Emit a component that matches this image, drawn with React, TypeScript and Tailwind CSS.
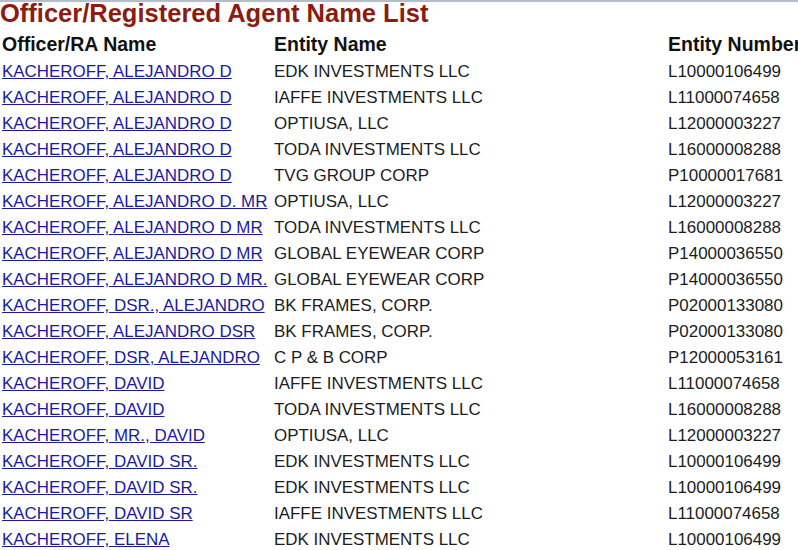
import React from "react";

const rows: [string, string, string][] = [
  ["KACHEROFF, ALEJANDRO D", "EDK INVESTMENTS LLC", "L10000106499"],
  ["KACHEROFF, ALEJANDRO D", "IAFFE INVESTMENTS LLC", "L11000074658"],
  ["KACHEROFF, ALEJANDRO D", "OPTIUSA, LLC", "L12000003227"],
  ["KACHEROFF, ALEJANDRO D", "TODA INVESTMENTS LLC", "L16000008288"],
  ["KACHEROFF, ALEJANDRO D", "TVG GROUP CORP", "P10000017681"],
  ["KACHEROFF, ALEJANDRO D. MR", "OPTIUSA, LLC", "L12000003227"],
  ["KACHEROFF, ALEJANDRO D MR", "TODA INVESTMENTS LLC", "L16000008288"],
  ["KACHEROFF, ALEJANDRO D MR", "GLOBAL EYEWEAR CORP", "P14000036550"],
  ["KACHEROFF, ALEJANDRO D MR.", "GLOBAL EYEWEAR CORP", "P14000036550"],
  ["KACHEROFF, DSR., ALEJANDRO", "BK FRAMES, CORP.", "P02000133080"],
  ["KACHEROFF, ALEJANDRO DSR", "BK FRAMES, CORP.", "P02000133080"],
  ["KACHEROFF, DSR, ALEJANDRO", "C P & B CORP", "P12000053161"],
  ["KACHEROFF, DAVID", "IAFFE INVESTMENTS LLC", "L11000074658"],
  ["KACHEROFF, DAVID", "TODA INVESTMENTS LLC", "L16000008288"],
  ["KACHEROFF, MR., DAVID", "OPTIUSA, LLC", "L12000003227"],
  ["KACHEROFF, DAVID SR.", "EDK INVESTMENTS LLC", "L10000106499"],
  ["KACHEROFF, DAVID SR.", "EDK INVESTMENTS LLC", "L10000106499"],
  ["KACHEROFF, DAVID SR", "IAFFE INVESTMENTS LLC", "L11000074658"],
  ["KACHEROFF, ELENA", "EDK INVESTMENTS LLC", "L10000106499"],
];

export default function App() {
  return (
    <div
      className="relative w-[798px] h-[550px] overflow-hidden bg-white"
      style={{ fontFamily: '"Liberation Sans", Arial, sans-serif' }}
    >
      <div className="absolute left-0 top-0 w-full h-[2px] bg-[#b5bdcb]" />
      <h1 className="text-[25.5px] font-bold leading-[26px] h-[26px] text-[#8a1c10] whitespace-nowrap">
        Officer/Registered Agent Name List
      </h1>
      <div className="grid grid-cols-[272px_394px_200px] pl-[2px] pt-[3px] text-[19.5px] leading-[30px] font-bold text-[#111] whitespace-nowrap">
        <div>Officer/RA Name</div>
        <div>Entity Name</div>
        <div>Entity Number</div>
      </div>
      <div className="flex flex-col">
        {rows.map((r, i) => (
          <div
            key={i}
            className="grid grid-cols-[272px_394px_200px] pl-[2px] h-[26px] text-[16.95px] leading-[26px] whitespace-nowrap text-[#1c1c1c]"
          >
            <div>
              <a href="#" className="text-[#1a1aa0] underline">
                {r[0]}
              </a>
            </div>
            <div>{r[1]}</div>
            <div>{r[2]}</div>
          </div>
        ))}
      </div>
    </div>
  );
}
